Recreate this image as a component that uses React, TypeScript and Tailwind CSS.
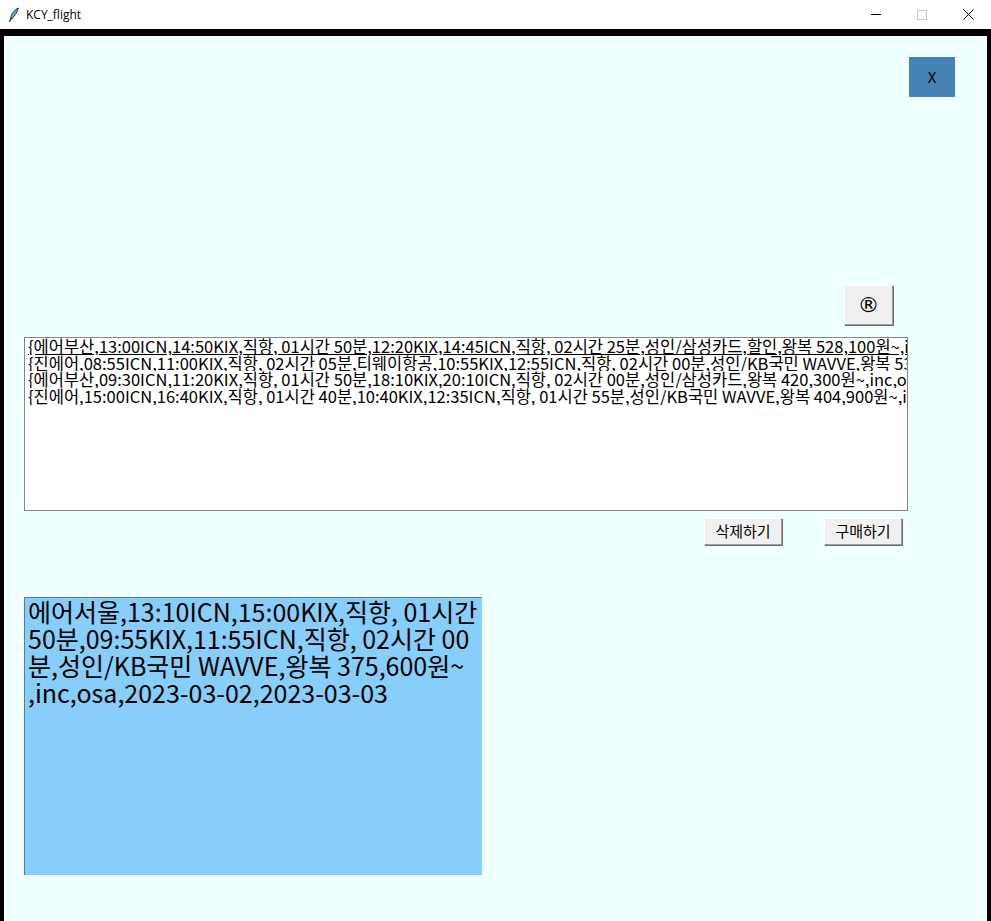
import React from 'react'

const FONT = '"Noto Sans CJK KR", "Liberation Sans", sans-serif'

// 검색 결과 목록: 첫 줄은 활성 항목이라 밑줄이 그어진다.
const RESULTS = [
  '{에어부산,13:00ICN,14:50KIX,직항, 01시간 50분,12:20KIX,14:45ICN,직항, 02시간 25분,성인/삼성카드,할인,왕복 528,100원~,inc,osa}',
  '{진에어,08:55ICN,11:00KIX,직항, 02시간 05분,티웨이항공,10:55KIX,12:55ICN,직항, 02시간 00분,성인/KB국민 WAVVE,왕복 539,000원~}',
  '{에어부산,09:30ICN,11:20KIX,직항, 01시간 50분,18:10KIX,20:10ICN,직항, 02시간 00분,성인/삼성카드,왕복 420,300원~,inc,osa}',
  '{진에어,15:00ICN,16:40KIX,직항, 01시간 40분,10:40KIX,12:35ICN,직항, 01시간 55분,성인/KB국민 WAVVE,왕복 404,900원~,inc,osa}',
]

const SELECTED = [
  '에어서울,13:10ICN,15:00KIX,직항, 01시간',
  '50분,09:55KIX,11:55ICN,직항, 02시간 00',
  '분,성인/KB국민 WAVVE,왕복 375,600원~',
  ',inc,osa,2023-03-02,2023-03-03',
]

function Feather() {
  return (
    <svg width="12" height="16" viewBox="0 0 12 16">
      <path d="M10.5 1 C6 3 3 7 2.5 12 L4 12 C6 9 9 6 10.5 1 Z" fill="#6fa8dc" stroke="#1f2f55" strokeWidth="1" />
      <path d="M2.5 12 L1.5 15" stroke="#1f2f55" strokeWidth="1.2" />
    </svg>
  )
}

function TkButton({ children, className }: { children: React.ReactNode; className: string }) {
  return (
    <div
      className={`flex items-center justify-center bg-[#f0f0f0] border border-t-white border-l-white border-b-[#a0a0a0] border-r-[#a0a0a0] shadow-[1px_1px_0_#696969] ${className}`}
    >
      {children}
    </div>
  )
}

export default function App() {
  return (
    <div className="flex h-[921px] w-[991px] flex-col bg-white" style={{ fontFamily: FONT }}>
      {/* 타이틀 바 */}
      <div className="flex h-[29px] shrink-0 items-center">
        <div className="ml-[7px] flex w-[14px] justify-center">
          <Feather />
        </div>
        <span className="ml-[5px] text-[12px] text-black" style={{ fontFamily: '"Open Sans", "Noto Sans", sans-serif' }}>
          KCY_flight
        </span>
        <div className="ml-auto flex h-full items-center">
          <div className="flex w-[46px] justify-center">
            <div className="h-px w-[10px] bg-black" />
          </div>
          <div className="flex w-[46px] justify-center">
            <div className="h-[10px] w-[10px] border border-[#c8c8c8]" />
          </div>
          <div className="flex w-[46px] justify-center">
            <svg width="11" height="11" viewBox="0 0 11 11">
              <path d="M0.5 0.5 L10.5 10.5 M10.5 0.5 L0.5 10.5" stroke="#000" strokeWidth="1" />
            </svg>
          </div>
        </div>
      </div>

      {/* 창 테두리 + 본문 */}
      <div className="flex flex-1 flex-col bg-black pl-[4px] pr-[4px] pt-[7px]">
        <div className="flex flex-1 flex-col bg-[#f0ffff] pt-[21px]">
          <div className="mr-[32px] flex h-[40px] w-[46px] items-center justify-center self-end bg-[#4682b4] text-[15px] text-black">
            X
          </div>

          <TkButton className="mr-[94px] mt-[188px] h-[40px] w-[49px] self-end text-black">
            <span className="text-[22px] leading-none" style={{ fontFamily: '"DejaVu Sans", sans-serif' }}>
              ®
            </span>
          </TkButton>

          <div className="ml-[20px] mt-[12px] h-[174px] w-[884px] overflow-hidden border border-[#828790] bg-white pl-[3px]">
            {RESULTS.map((r, i) => (
              <div
                key={i}
                className={`overflow-hidden whitespace-nowrap text-[16.5px] leading-[16.7px] text-black ${i === 0 ? 'underline' : ''}`}
              >
                {r}
              </div>
            ))}
          </div>

          <div className="mt-[7px] flex">
            <TkButton className="ml-[700px] h-[27px] w-[78px] text-[15px] text-black">삭제하기</TkButton>
            <TkButton className="ml-[42px] h-[27px] w-[78px] text-[15px] text-black">구매하기</TkButton>
          </div>

          <div className="ml-[20px] mt-[52px] h-[278px] w-[458px] border-l border-t border-[#4a7fa8] bg-[#87cefa] pl-[3px]">
            {SELECTED.map((l, i) => (
              <div key={i} className="whitespace-nowrap text-[25px] leading-[27px] text-black">
                {l}
              </div>
            ))}
          </div>
        </div>
      </div>
    </div>
  )
}
